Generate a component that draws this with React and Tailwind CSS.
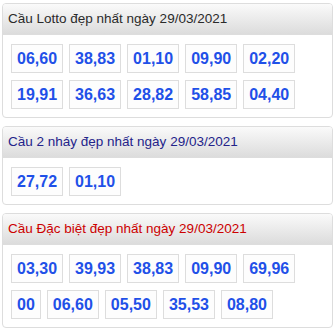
import React from "react";

const cards = [
  {
    title: "Cầu Lotto đẹp nhất ngày 29/03/2021",
    color: "text-[#2a2a2a]",
    items: ["06,60", "38,83", "01,10", "09,90", "02,20", "19,91", "36,63", "28,82", "58,85", "04,40"],
  },
  {
    title: "Cầu 2 nháy đẹp nhất ngày 29/03/2021",
    color: "text-[#23238a]",
    items: ["27,72", "01,10"],
  },
  {
    title: "Cầu Đặc biệt đẹp nhất ngày 29/03/2021",
    color: "text-[#cc0000]",
    items: ["03,30", "39,93", "38,83", "09,90", "69,96", "00", "06,60", "05,50", "35,53", "08,80"],
  },
];

export default function App() {
  return (
    <div
      className="w-[336px] h-[330px] bg-white px-[2px] pt-[3px] flex flex-col gap-[8px]"
      style={{ fontFamily: '"Liberation Sans", Arial, sans-serif' }}
    >
      {cards.map((c) => (
        <div key={c.title} className="w-[331px] border border-[#dddddd] rounded-[4px] bg-white overflow-hidden">
          <div
            className={`h-[31px] flex items-center pl-[5px] pt-[1px] text-[13.5px] bg-gradient-to-b from-[#fafafa] to-[#dcdcdc] border-b border-[#dddddd] ${c.color}`}
          >
            {c.title}
          </div>
          <div className="pl-[8px] pr-[8px] pt-[9px] pb-[8px] flex flex-wrap gap-x-[6px] gap-y-[7px]">
            {c.items.map((it, i) => (
              <div
                key={i}
                className="h-[29px] px-[5px] border border-[#dddddd] bg-[#fdfdfd] flex items-center text-[16px] font-bold text-[#1f50e8]"
              >
                {it}
              </div>
            ))}
          </div>
        </div>
      ))}
    </div>
  );
}
